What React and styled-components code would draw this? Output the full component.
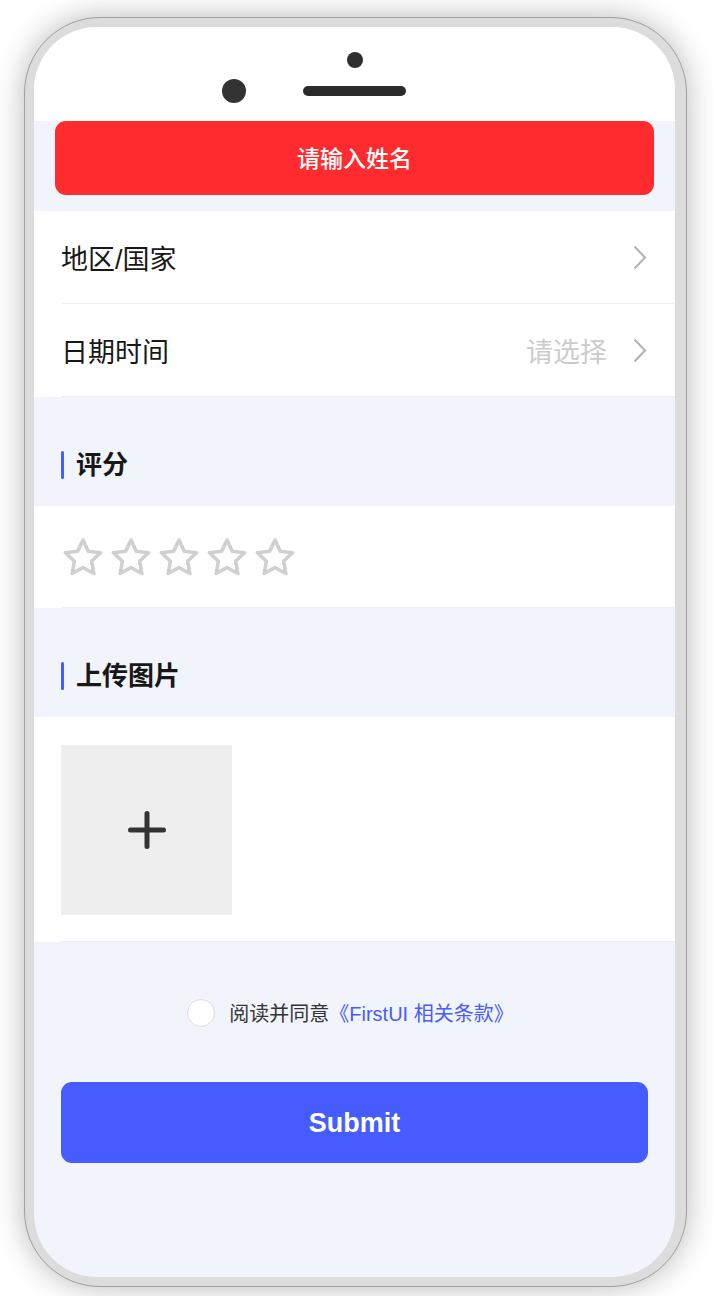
import React from 'react';
import styled, { createGlobalStyle } from 'styled-components';

const GlobalStyle = createGlobalStyle`
  html, body {
    margin: 0;
    padding: 0;
    background: #ffffff;
  }
  body {
    font-family: "Liberation Sans", "Noto Sans CJK SC", sans-serif;
    -webkit-font-smoothing: antialiased;
  }
`;

const Page = styled.div`
  width: 714px;
  height: 1296px;
  padding: 17px 0 0 24px;
  box-sizing: border-box;
  overflow: hidden;
`;

const Frame = styled.div`
  width: 663px;
  height: 1270px;
  box-sizing: border-box;
  padding: 9px 11px 9px 9px;
  border: 1.5px solid #a0a0a0;
  border-radius: 76px;
  background: #dcdcdc;
  box-shadow: 0 0 30px rgba(0, 0, 0, 0.28);
`;

const Screen = styled.div`
  height: 100%;
  border-radius: 63px;
  overflow: hidden;
  background: #f1f4fa;
  display: flex;
  flex-direction: column;
`;

const Notch = styled.div`
  background: #ffffff;
  height: 94px;
  box-sizing: border-box;
  padding-top: 25px;
  display: flex;
  flex-direction: column;
  align-items: center;
`;

const Sensor = styled.div`
  width: 16px;
  height: 16px;
  border-radius: 50%;
  background: #2f2f2f;
`;

const NotchRow = styled.div`
  margin-top: 11px;
  width: 100%;
  height: 24px;
  display: grid;
  grid-template-columns: 1fr auto 1fr;
  align-items: center;
`;

const Camera = styled.div`
  justify-self: end;
  margin-right: 57px;
  width: 24px;
  height: 24px;
  border-radius: 50%;
  background: #333333;
`;

const Speaker = styled.div`
  width: 103px;
  height: 10px;
  border-radius: 5px;
  background: #2b2b2b;
`;

const Toast = styled.div`
  margin: 0 21px 16px;
  height: 74px;
  box-sizing: border-box;
  padding-bottom: 3px;
  border-radius: 11px;
  background: #ff2b2e;
  color: #ffffff;
  font-family: "Noto Sans CJK SC", sans-serif;
  font-size: 23px;
  font-weight: 500;
  display: flex;
  align-items: center;
  justify-content: center;
`;

const Group = styled.div`
  background: #ffffff;
`;

const Cell = styled.div`
  margin-left: 27px;
  padding-right: 28px;
  height: 92px;
  border-bottom: 1px solid #eeeeee;
  display: flex;
  align-items: center;
`;

const Label = styled.span`
  flex: 1;
  font-size: 27px;
  color: #181818;
`;

const Value = styled.span`
  font-size: 27px;
  color: #cccccc;
  margin-right: 26px;
`;

const SectionHead = styled.div`
  padding: 54px 27px 27px;
  display: flex;
  align-items: center;
  gap: 12px;
`;

const Bar = styled.span`
  width: 3px;
  height: 28px;
  border-radius: 2px;
  background: #465cff;
`;

const SectionTitle = styled.span`
  font-size: 26px;
  font-weight: 700;
  color: #181818;
  line-height: 28px;
`;

const Block = styled.div`
  margin-left: 27px;
  border-bottom: 1px solid #eeeeee;
  padding: ${({ $pad }) => $pad};
  display: flex;
  align-items: center;
  gap: ${({ $gap }) => $gap || 0}px;
`;

const UploadBox = styled.div`
  width: 171px;
  height: 170px;
  background: #eeeeee;
  display: flex;
  align-items: center;
  justify-content: center;
`;

const Agree = styled.div`
  margin-top: 56px;
  display: flex;
  align-items: center;
  justify-content: center;
  gap: 14px;
  padding-right: 8px;
`;

const Radio = styled.span`
  width: 26px;
  height: 26px;
  border-radius: 50%;
  border: 1px solid #dddddd;
  background: #ffffff;
`;

const AgreeText = styled.span`
  font-size: 20px;
  color: #333333;
  font-family: "Liberation Sans", "Noto Sans CJK SC", sans-serif;
`;

const Link = styled.span`
  color: #465cff;
`;

const SubmitButton = styled.button`
  margin: 55px 27px 0;
  height: 81px;
  padding-top: 3px;
  border: none;
  border-radius: 11px;
  background: #465cff;
  color: #ffffff;
  font-family: "Liberation Sans", sans-serif;
  font-size: 27px;
  font-weight: 700;
`;

const Chevron = () => (
  <svg width="14" height="25" viewBox="0 0 14 25">
    <polyline
      points="1.5,1.5 12,12.5 1.5,23.5"
      fill="none"
      stroke="#b2b2b2"
      strokeWidth="2"
    />
  </svg>
);

const Star = () => (
  <svg width="42" height="42" viewBox="0 0 42 42">
    <polygon
      points="21,3 26.29,14.22 38.59,15.78 29.56,24.28 31.87,36.47 21,30.5 10.13,36.47 12.44,24.28 3.41,15.78 15.71,14.22"
      fill="none"
      stroke="#d0d0d0"
      strokeWidth="3.6"
      strokeLinejoin="round"
    />
  </svg>
);

const Plus = () => (
  <svg width="40" height="40" viewBox="0 0 40 40">
    <path
      d="M20 3.5v33M3.5 20h33"
      stroke="#333333"
      strokeWidth="5"
      strokeLinecap="round"
    />
  </svg>
);

const Section = ({ title }) => (
  <SectionHead>
    <Bar />
    <SectionTitle>{title}</SectionTitle>
  </SectionHead>
);

const App = () => (
  <Page>
    <GlobalStyle />
    <Frame>
      <Screen>
        <Notch>
          <Sensor />
          <NotchRow>
            <Camera />
            <Speaker />
          </NotchRow>
        </Notch>
        <Toast>请输入姓名</Toast>
        <Group>
          <Cell>
            <Label>地区/国家</Label>
            <Chevron />
          </Cell>
          <Cell>
            <Label>日期时间</Label>
            <Value>请选择</Value>
            <Chevron />
          </Cell>
        </Group>
        <Section title="评分" />
        <Group>
          <Block $pad="31px 0 28px 1px" $gap={6}>
            {[0, 1, 2, 3, 4].map((i) => (
              <Star key={i} />
            ))}
          </Block>
        </Group>
        <Section title="上传图片" />
        <Group>
          <Block $pad="28px 0 26px">
            <UploadBox>
              <Plus />
            </UploadBox>
          </Block>
        </Group>
        <Agree>
          <Radio />
          <AgreeText>
            阅读并同意<Link>《FirstUI 相关条款》</Link>
          </AgreeText>
        </Agree>
        <SubmitButton>Submit</SubmitButton>
      </Screen>
    </Frame>
  </Page>
);

export default App;
